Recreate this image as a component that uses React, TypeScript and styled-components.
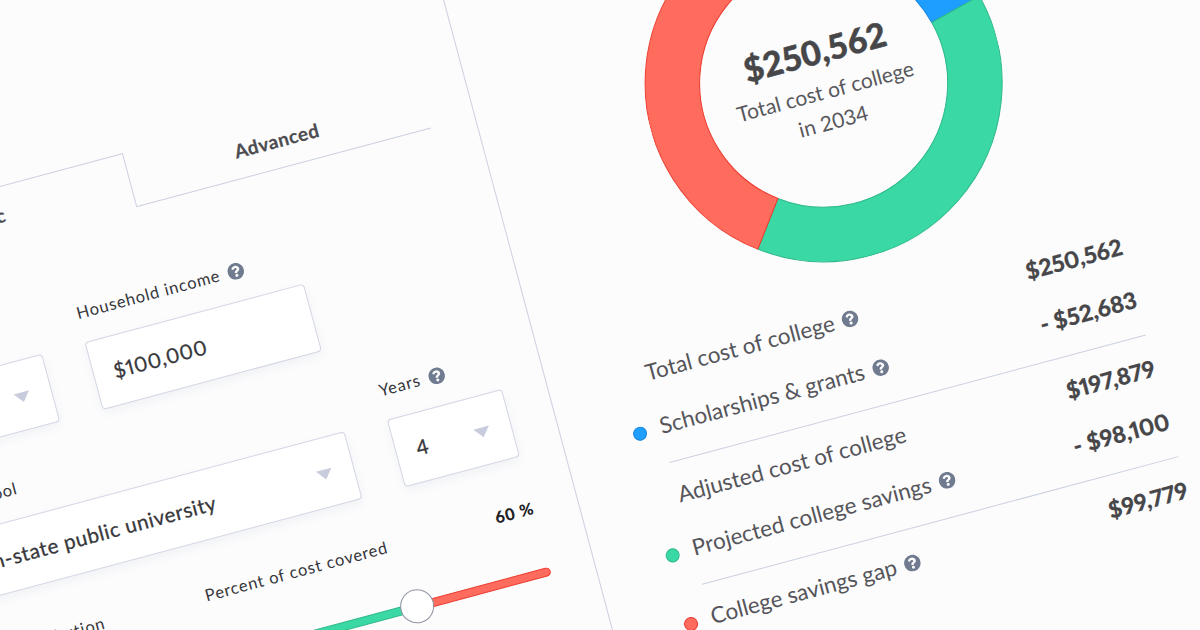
import React from "react";
import styled, { createGlobalStyle } from "styled-components";
import { FaQuestionCircle } from "react-icons/fa";

const GlobalStyle = createGlobalStyle`
  html, body {
    margin: 0;
    padding: 0;
    background: #fcfcfd;
    font-family: "Lato", "Open Sans", sans-serif;
    color: #4a4a4d;
  }
`;

const Stage = styled.div`
  width: 1200px;
  height: 630px;
  overflow: hidden;
  display: flex;
  justify-content: center;
  align-items: center;
  background: #fcfcfd;
`;

const Canvas = styled.div`
  flex: none;
  width: 1600px;
  height: 900px;
  display: flex;
  transform: rotate(-15deg);
`;

const Panel = styled.section`
  flex: none;
  box-sizing: border-box;
  width: 731px;
  height: 900px;
  padding: 170px 45px 0 76px;
  border-right: 1px solid #ccd0e1;
`;

const Tabs = styled.div`
  display: grid;
  grid-template-columns: 1fr 1fr;
  height: 56px;
  margin-bottom: 77px;
`;

const Tab = styled.div<{ $active?: boolean }>`
  box-sizing: border-box;
  display: flex;
  align-items: center;
  justify-content: center;
  font-size: 19px;
  font-weight: 700;
  letter-spacing: 0.4px;
  color: #4c4c50;
  -webkit-text-stroke: 0.2px #4c4c50;
  border-style: solid;
  border-color: #ccd0e1;
  border-width: ${(p) => (p.$active ? "1px 1px 0 1px" : "0 0 1px 0")};
`;

const Row = styled.div`
  display: flex;
  gap: 44px;
  margin-bottom: 43px;
`;

const Field = styled.div<{ $width: number }>`
  flex: none;
  width: ${(p) => p.$width}px;
`;

const Label = styled.label`
  display: flex;
  align-items: center;
  gap: 8px;
  height: 20px;
  margin-bottom: 20px;
  font-size: 16.5px;
  line-height: 20px;
  letter-spacing: 0.8px;
  color: #36363a;
  white-space: nowrap;
`;

const Help = styled(FaQuestionCircle)<{ $size?: number }>`
  flex: none;
  width: ${(p) => p.$size ?? 17}px;
  height: ${(p) => p.$size ?? 17}px;
  color: #707b90;
`;

const Box = styled.div`
  box-sizing: border-box;
  height: 70px;
  padding: 0 21px 0 20px;
  display: flex;
  align-items: center;
  justify-content: space-between;
  background: #fff;
  border: 1px solid #d3d6e5;
  border-radius: 4px;
  box-shadow: 0 4px 10px rgba(70, 80, 120, 0.06);
  font-size: 20.5px;
  letter-spacing: 0.6px;
  font-variant-numeric: proportional-nums;
  color: #37373b;
  -webkit-text-stroke: 0.3px #37373b;
  white-space: nowrap;
`;

const Arrow = styled.span`
  flex: none;
  width: 0;
  height: 0;
  margin-top: 4px;
  border-left: 8px solid transparent;
  border-right: 8px solid transparent;
  border-top: 10px solid #c9ccdc;
`;

const SliderHead = styled.div`
  display: flex;
  justify-content: space-between;
  height: 20px;
  margin-bottom: 38px;
  font-size: 16.5px;
  line-height: 20px;
  letter-spacing: 0.8px;
  color: #36363a;
  white-space: nowrap;
`;

const Percent = styled.b`
  font-weight: 900;
  color: #222226;
`;

const Slider = styled.div`
  position: relative;
  height: 34px;
  display: flex;
  align-items: center;
`;

const Track = styled.div<{ $color: string; $edge: string; $grow: number }>`
  flex: ${(p) => p.$grow};
  box-sizing: border-box;
  height: 9px;
  background: ${(p) => p.$color};
  border: 1px solid ${(p) => p.$edge};
  border-radius: 5px;
`;

const Thumb = styled.div`
  position: absolute;
  top: 0;
  box-sizing: border-box;
  width: 34px;
  height: 34px;
  margin-left: -19px;
  background: #fff;
  border: 1.5px solid #8f94a3;
  border-radius: 50%;
`;

const Results = styled.section`
  flex: none;
  box-sizing: border-box;
  width: 493px;
  margin-left: 98px;
  padding-top: 105px;
`;

const Donut = styled.div`
  position: relative;
  width: 358px;
  height: 358px;
  margin: 0 auto 22px;
`;

const DonutCenter = styled.div`
  position: absolute;
  inset: 0;
  display: flex;
  flex-direction: column;
  align-items: center;
  justify-content: center;
  padding-bottom: 2px;
  box-sizing: border-box;
`;

const DonutTotal = styled.div`
  font-size: 34px;
  line-height: 44px;
  font-weight: 900;
  color: #47474a;
  -webkit-text-stroke: 0.4px #47474a;
  margin-bottom: 3px;
`;

const DonutCaption = styled.div`
  font-size: 21px;
  line-height: 31px;
  text-align: center;
  color: #58585c;
`;

const Group = styled.div<{ $last?: boolean }>`
  display: flex;
  flex-direction: column;
  gap: 27px;
  padding: 19px 0 23px;
  border-bottom: ${(p) => (p.$last ? "none" : "1px solid #ccd0e1")};
`;

const Line = styled.div`
  display: flex;
  align-items: center;
  justify-content: space-between;
  height: 28px;
  font-size: 22.5px;
  line-height: 28px;
  color: #55555a;
  white-space: nowrap;
`;

const LineName = styled.div`
  display: flex;
  align-items: center;
`;

const Dot = styled.span<{ $color: string; $edge: string }>`
  flex: none;
  box-sizing: border-box;
  width: 14px;
  height: 14px;
  margin-left: -28px;
  margin-right: 14px;
  margin-top: 3px;
  background: ${(p) => p.$color};
  border: 1px solid ${(p) => p.$edge};
  border-radius: 50%;
`;

const LineHelp = styled(Help)`
  margin-left: 8px;
`;

const Amount = styled.div`
  font-weight: 900;
  font-size: 23px;
  font-variant-numeric: proportional-nums;
  color: #47474a;
  -webkit-text-stroke: 0.2px #47474a;
`;

const BLUE = { color: "#1e9fff", edge: "#1a86e0" };
const GREEN = { color: "#3ad8a4", edge: "#2fb98a" };
const RED = { color: "#ff6b5c", edge: "#ec3d30" };

const TOTAL = 250562;
const SHARES = [
  { value: 52683, ...BLUE },
  { value: 98100, ...GREEN },
  { value: 99779, ...RED },
];

// bearing in degrees, clockwise from the top
const point = (r: number, deg: number) => {
  const a = (deg * Math.PI) / 180;
  return `${(179 + r * Math.sin(a)).toFixed(2)} ${(179 - r * Math.cos(a)).toFixed(2)}`;
};

const ring = (from: number, to: number) => {
  const large = to - from > 180 ? 1 : 0;
  return [
    `M${point(178.5, from)}`,
    `A178.5 178.5 0 ${large} 1 ${point(178.5, to)}`,
    `L${point(124, to)}`,
    `A124 124 0 ${large} 0 ${point(124, from)}`,
    "Z",
  ].join(" ");
};

const DonutChart = () => {
  let angle = 0;
  return (
    <svg width="358" height="358" viewBox="0 0 358 358">
      {SHARES.map((s) => {
        const from = angle;
        angle += (s.value / TOTAL) * 360;
        return <path key={s.value} d={ring(from, angle)} fill={s.color} stroke={s.edge} strokeWidth="1" />;
      })}
    </svg>
  );
};

export default function App() {
  return (
    <Stage>
      <GlobalStyle />
      <Canvas>
        <Panel>
          <Tabs>
            <Tab $active>Basic</Tab>
            <Tab>Advanced</Tab>
          </Tabs>
          <Row>
            <Field $width={175}>
              <Label>
                Age of child <Help />
              </Label>
              <Box>
                3 <Arrow />
              </Box>
            </Field>
            <Field $width={227}>
              <Label>
                Household income <Help />
              </Label>
              <Box>$100,000</Box>
            </Field>
          </Row>
          <Row>
            <Field $width={447}>
              <Label>Type of school</Label>
              <Box>
                Avg. in-state public university <Arrow />
              </Box>
            </Field>
            <Field $width={119}>
              <Label>
                Years <Help />
              </Label>
              <Box>
                4 <Arrow />
              </Box>
            </Field>
          </Row>
          <Row>
            <Field $width={226}>
              <Label>Student contribution</Label>
            </Field>
            <Field $width={340}>
              <SliderHead>
                Percent of cost covered
                <Percent>60 %</Percent>
              </SliderHead>
              <Slider>
                <Track $grow={60} $color={GREEN.color} $edge={GREEN.edge} />
                <Track $grow={40} $color={RED.color} $edge={RED.edge} />
                <Thumb style={{ left: "60%" }} />
              </Slider>
            </Field>
          </Row>
        </Panel>
        <Results>
          <Donut>
            <DonutChart />
            <DonutCenter>
              <DonutTotal>$250,562</DonutTotal>
              <DonutCaption>
                Total cost of college
                <br />
                in 2034
              </DonutCaption>
            </DonutCenter>
          </Donut>
          <Group>
            <Line>
              <LineName>
                Total cost of college
                <LineHelp />
              </LineName>
              <Amount>$250,562</Amount>
            </Line>
            <Line>
              <LineName>
                <Dot $color={BLUE.color} $edge={BLUE.edge} />
                Scholarships &amp; grants
                <LineHelp />
              </LineName>
              <Amount>- $52,683</Amount>
            </Line>
          </Group>
          <Group>
            <Line>
              <LineName>Adjusted cost of college</LineName>
              <Amount>$197,879</Amount>
            </Line>
            <Line>
              <LineName>
                <Dot $color={GREEN.color} $edge={GREEN.edge} />
                Projected college savings
                <LineHelp />
              </LineName>
              <Amount>- $98,100</Amount>
            </Line>
          </Group>
          <Group $last>
            <Line>
              <LineName>
                <Dot $color={RED.color} $edge={RED.edge} />
                College savings gap
                <LineHelp />
              </LineName>
              <Amount>$99,779</Amount>
            </Line>
          </Group>
        </Results>
      </Canvas>
    </Stage>
  );
}
